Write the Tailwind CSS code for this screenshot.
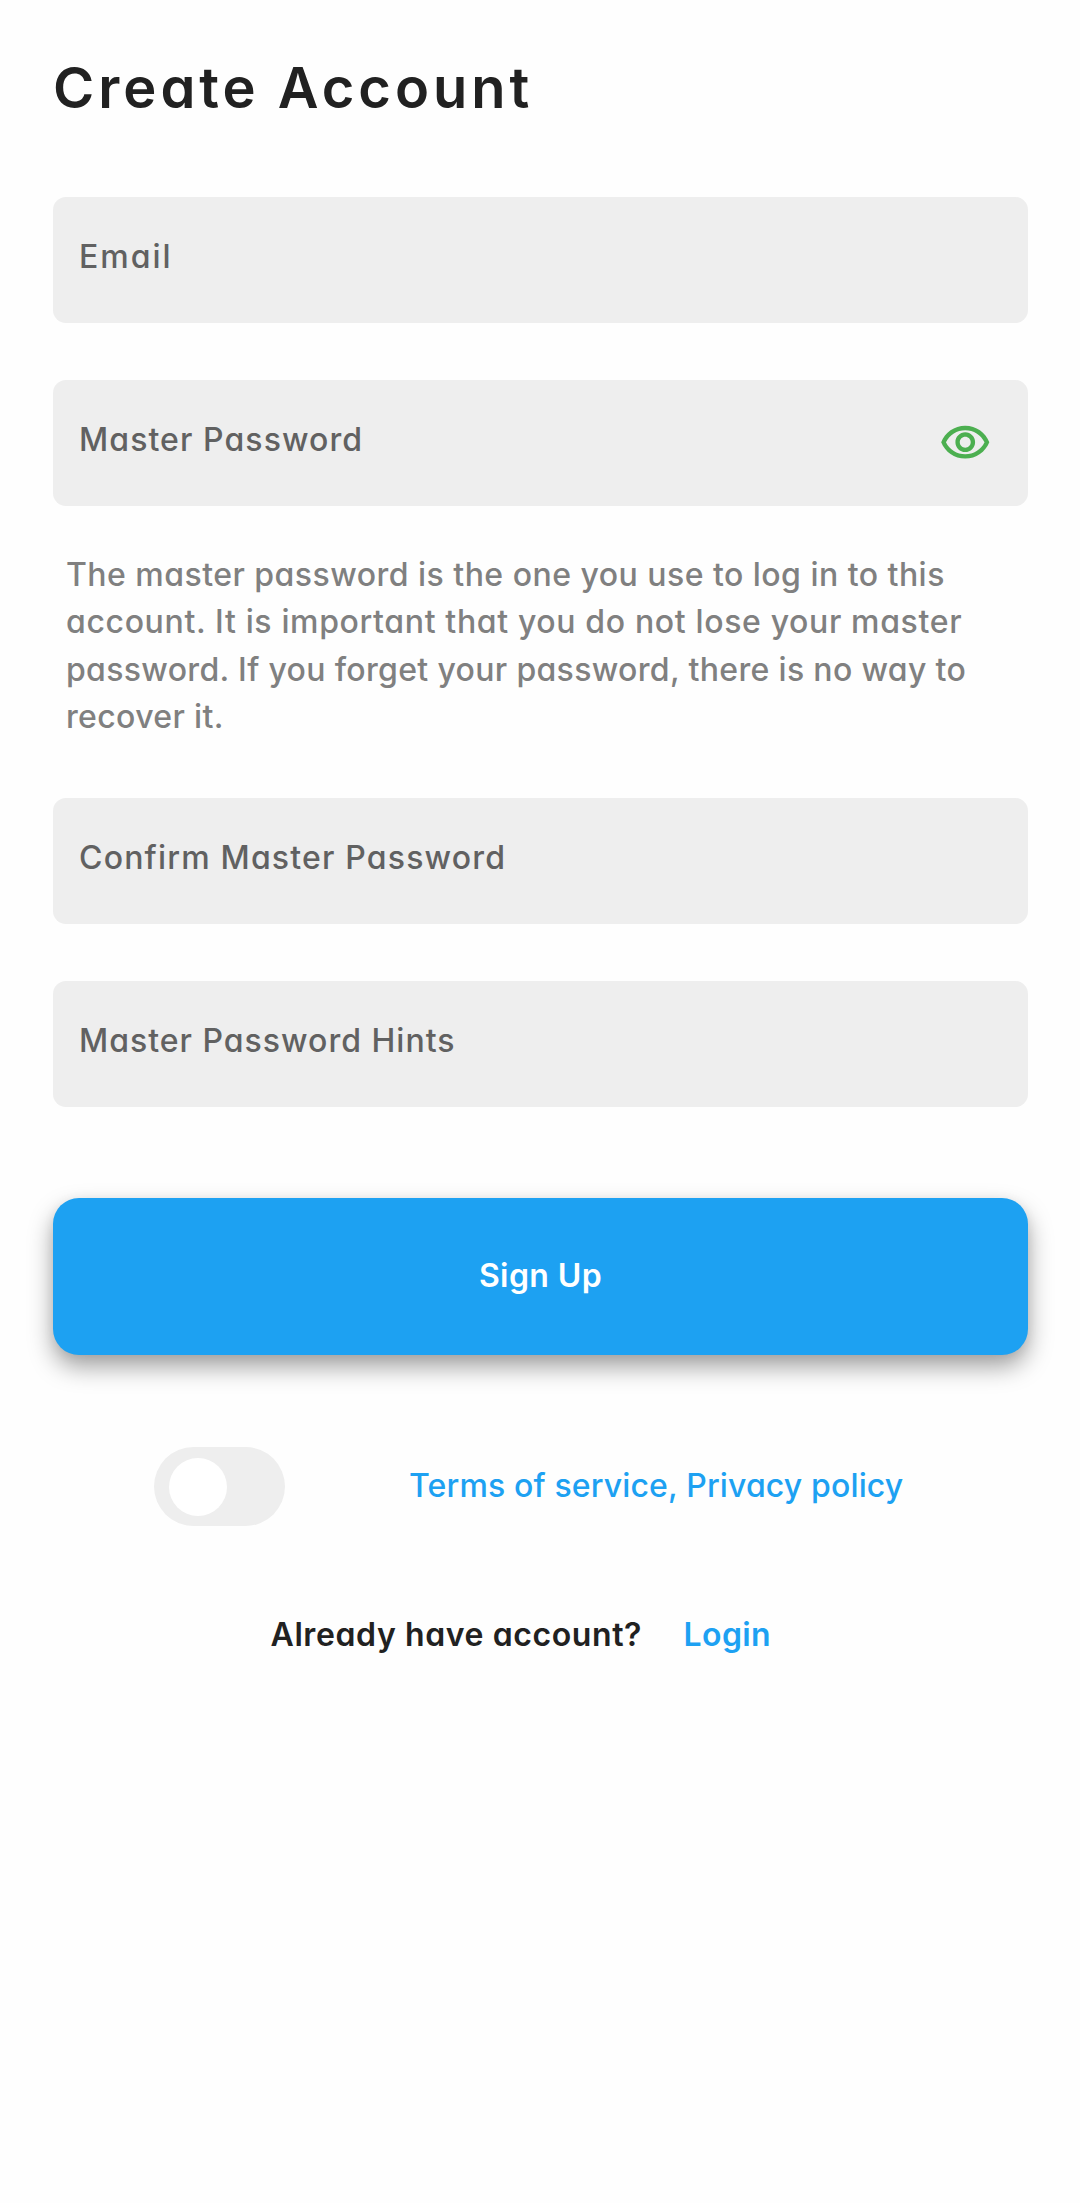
<!DOCTYPE html>
<html lang="en">
<head>
<meta charset="utf-8">
<title>Create Account</title>
<script src="https://cdn.jsdelivr.net/npm/@tailwindcss/browser@4"></script>
</head>
<body class="min-h-[2203px] bg-[#fefefe] px-[53px] pt-[56px] pr-[52px] font-['Inter',sans-serif] text-[32px] leading-[48px] font-medium text-[#212121] [font-feature-settings:'cv11']">
  <h1 class="h-[64px] whitespace-nowrap text-[56px] leading-[64px] font-semibold tracking-[4px]">Create Account</h1>

  <form class="mt-[77px] flex flex-col">
    <label class="flex h-[126px] items-center rounded-[13px] bg-[#eeeeee] pb-[6px] pl-[26px] text-[#616161]">
      <span class="tracking-[2px]">Email</span>
    </label>

    <label class="mt-[57px] flex h-[126px] items-center justify-between rounded-[13px] bg-[#eeeeee] pr-[37px] pl-[26px] text-[#616161]">
      <span class="pb-[6px] tracking-[1.08px]">Master Password</span>
      <svg class="size-[52.5px] text-[#4caf50]" viewBox="0 0 24 24" fill="currentColor" aria-hidden="true">
        <path d="M12 6c3.79 0 7.17 2.13 8.82 5.5C19.17 14.87 15.79 17 12 17s-7.17-2.13-8.82-5.5C4.83 8.13 8.21 6 12 6m0-2C7 4 2.73 7.11 1 11.5 2.73 15.89 7 19 12 19s9.27-3.11 11-7.5C21.27 7.11 17 4 12 4zm0 5c1.38 0 2.5 1.12 2.5 2.5S13.38 14 12 14s-2.5-1.12-2.5-2.5S10.62 9 12 9m0-2c-2.48 0-4.5 2.02-4.5 4.5S9.52 16 12 16s4.5-2.02 4.5-4.5S14.48 7 12 7z"/>
      </svg>
    </label>

    <p class="mt-[45px] flex flex-col pl-[13px] leading-[47.25px] whitespace-nowrap text-[#808080]">
      <span class="tracking-[0.47px]">The master password is the one you use to log in to this</span>
      <span class="tracking-[0.64px]">account. It is important that you do not lose your master</span>
      <span class="tracking-[0.33px]">password. If you forget your password, there is no way to</span>
      <span class="tracking-[0.35px]">recover it.</span>
    </p>

    <label class="mt-[58px] flex h-[126px] items-center rounded-[13px] bg-[#eeeeee] pb-[6px] pl-[26px] text-[#616161]">
      <span class="tracking-[1.18px]">Confirm Master Password</span>
    </label>

    <label class="mt-[57px] flex h-[126px] items-center rounded-[13px] bg-[#eeeeee] pb-[6px] pl-[26px] text-[#616161]">
      <span class="tracking-[1px]">Master Password Hints</span>
    </label>

    <button type="button" class="mt-[91px] flex h-[157px] items-center justify-center rounded-[26px] bg-[#1da1f2] pb-[2px] font-semibold tracking-[0.4px] text-white shadow-[0_12px_24px_rgba(0,0,0,0.36),0_2px_12px_rgba(0,0,0,0.06)]">Sign Up</button>

    <div class="mt-[92px] flex h-[79px] items-center pl-[101px]">
      <span class="flex h-[79px] w-[131px] items-center rounded-full bg-[#eeeeee] pl-[14.5px]">
        <span class="size-[58px] rounded-full bg-white"></span>
      </span>
      <a class="ml-[124px] pb-[2px] whitespace-nowrap tracking-[0.14px] text-[#1da1f2]">Terms of service, Privacy policy</a>
    </div>

    <div class="mt-[85px] flex pl-[217.5px] font-semibold whitespace-nowrap">
      <span class="w-[413px] tracking-[0.6px]">Already have account?</span>
      <a class="tracking-[0.4px] text-[#1da1f2]">Login</a>
    </div>
  </form>
</body>
</html>
